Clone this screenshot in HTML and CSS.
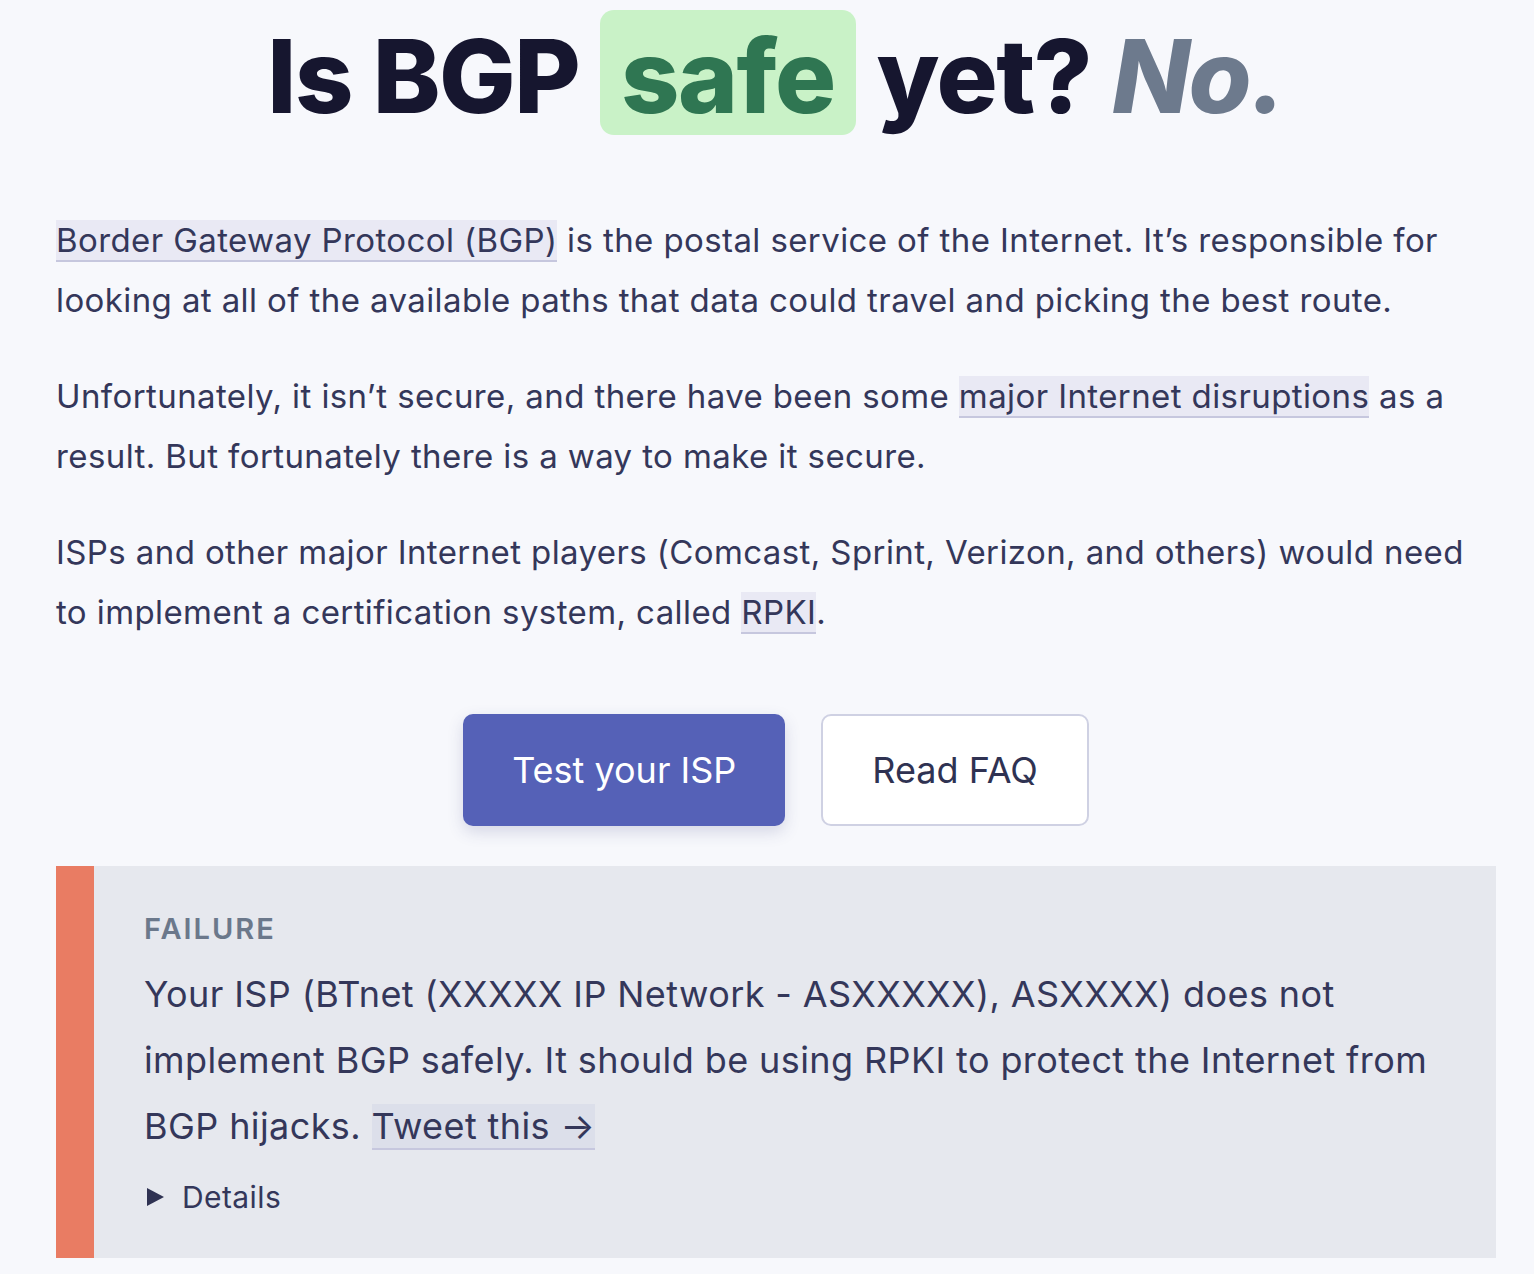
FILE: index.html
```html
<!DOCTYPE html>
<html lang="en">

<head>
    <meta charset="UTF-8">
    <title>Is BGP safe yet?</title>
    <link rel="stylesheet" href="styles.css">
</head>

<body>

    <div class="page">
        <h1 class="title">Is BGP <span class="safe">safe</span> yet? <em class="answer">No.</em></h1>

        <p>
            <a href="#" class="link">Border Gateway Protocol (BGP)</a> is the postal service of the Internet. It’s responsible for
            looking at all of the available paths that data could travel and picking the best route.
        </p>
        <p>
            Unfortunately, it isn’t secure, and there have been some <a href="#" class="link">major Internet disruptions</a> as a
            result. But fortunately there is a way to make it secure.
        </p>
        <p>
            ISPs and other major Internet players (Comcast, Sprint, Verizon, and others) would need
            to implement a certification system, called <a href="#" class="link">RPKI</a>.
        </p>

        <div class="actions">
            <button class="btn btn-primary">Test your ISP</button>
            <button class="btn btn-secondary">Read FAQ</button>
        </div>

        <div class="result">
            <div class="result-bar"></div>
            <div class="result-body">
                <div class="result-label">Failure</div>
                <p class="result-text">
                    Your ISP (BTnet (XXXXX IP Network - ASXXXXX), ASXXXX) does not
                    implement BGP safely. It should be using RPKI to protect the Internet from
                    BGP hijacks. <a href="#" class="link link-dark">Tweet this →</a>
                </p>
                <details class="details">
                    <summary>Details</summary>
                </details>
            </div>
        </div>
    </div>

</body>

</html>
```

FILE: styles.css
```css
body {
    margin: 0;
    background: #f7f8fc;
    font-family: Inter, "Noto Sans", sans-serif;
    color: #34375a;
}

.page {
    width: 1440px;
    margin-left: 56px;
    padding-top: 10px;
}

.title {
    margin: 0;
    text-align: center;
    font-size: 102px;
    line-height: 117px;
    font-weight: 800;
    letter-spacing: -1.5px;
    color: #16162f;
}

.safe {
    display: inline-block;
    padding: 8px 21px 0;
    background: #c9f2c7;
    color: #2f7652;
    border-radius: 14px;
}

.answer {
    color: #6d7a8d;
}

p {
    margin: 36px 0 0;
    font-size: 33px;
    line-height: 60px;
    letter-spacing: 0.4px;
}

.title + p {
    margin-top: 75px;
}

.link {
    color: #34375a;
    text-decoration: none;
    background: #e9e9f4;
    border-bottom: 2px solid #c6c7de;
}

.actions {
    display: flex;
    justify-content: center;
    gap: 36px;
    margin-top: 72px;
}

.btn {
    height: 112px;
    padding: 0 49px;
    font-family: inherit;
    font-size: 36px;
    border-radius: 10px;
    cursor: pointer;
}

.btn-primary {
    background: #5561b7;
    color: #fff;
    border: none;
    box-shadow: 0 6px 16px rgba(60, 66, 130, 0.18);
}

.btn-secondary {
    background: #fff;
    color: #2f3252;
    border: 2px solid #cfd1e3;
}

.result {
    display: flex;
    margin-top: 40px;
    background: #e6e8ee;
}

.result-bar {
    width: 38px;
    flex-shrink: 0;
    background: #e97c63;
}

.result-body {
    flex: 1;
    padding: 43px 50px 39px;
}

.result-label {
    font-size: 29px;
    line-height: 40px;
    font-weight: 600;
    letter-spacing: 2px;
    text-transform: uppercase;
    color: #6b788b;
}

.result-text {
    margin: 12px 0 0;
    font-size: 36px;
    line-height: 66px;
    letter-spacing: 0.4px;
}

.link-dark {
    background: #dcdfea;
}

.details {
    margin-top: 16px;
    font-size: 30px;
    line-height: 44px;
    letter-spacing: 0.4px;
}

.details summary {
    display: flex;
    align-items: center;
    list-style: none;
    cursor: pointer;
}

.details summary::-webkit-details-marker {
    display: none;
}

.details summary::before {
    content: "";
    flex-shrink: 0;
    width: 0;
    height: 0;
    margin: 0 18px 0 3px;
    border-left: 17px solid #2f3252;
    border-top: 9px solid transparent;
    border-bottom: 9px solid transparent;
}
```
